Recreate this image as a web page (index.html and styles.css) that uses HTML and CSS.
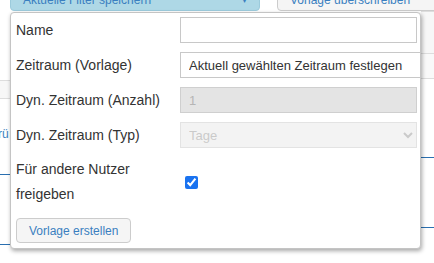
FILE: index.html
```html
<!DOCTYPE html>
<html lang="de">
<head>
<meta charset="utf-8">
<title>Filter speichern</title>
<link rel="stylesheet" href="styles.css">
</head>
<body>
<div class="page">
  <div class="toolbar">
    <button class="btn-save" type="button"><span>Aktuelle Filter speichern</span><span class="caret">▾</span></button>
    <button class="btn-overwrite" type="button">Vorlage überschreiben</button>
  </div>
  <div class="backdrop">
    <div class="side side-left">
      <div class="band band-left"></div>
      <div class="link-stub">rü</div>
      <div class="blue-line first"></div>
      <div class="blue-line second"></div>
    </div>
    <div class="middle"></div>
    <div class="side side-right">
      <div class="band band-right-a"></div>
      <div class="band band-right-b"></div>
      <div class="blue-line first-r"></div>
      <div class="blue-line second"></div>
    </div>
  </div>

  <div class="popup">
    <form class="form-grid">
      <label class="lbl" for="name">Name</label>
      <input class="ctl text" id="name" type="text">

      <label class="lbl" for="zeitraum">Zeitraum (Vorlage)</label>
      <div class="select-wrap">
        <select class="ctl select wide" id="zeitraum">
          <option>Aktuell gewählten Zeitraum festlegen</option>
        </select>
      </div>

      <label class="lbl" for="anzahl">Dyn. Zeitraum (Anzahl)</label>
      <input class="ctl text disabled" id="anzahl" type="text" placeholder="1" disabled>

      <label class="lbl" for="typ">Dyn. Zeitraum (Typ)</label>
      <select class="ctl select disabled-select" id="typ" disabled>
        <option>Tage</option>
      </select>

      <label class="lbl lbl-multi" for="share">Für andere Nutzer freigeben</label>
      <div class="check-cell"><input class="check" id="share" type="checkbox" checked></div>

      <div class="actions">
        <button class="btn-create" type="button">Vorlage erstellen</button>
      </div>
    </form>
  </div>
</div>
</body>
</html>
```
FILE: styles.css
```css
html, body {
  margin: 0;
  padding: 0;
  background: #fff;
}
body {
  width: 434px;
  height: 263px;
  overflow: hidden;
  font-family: "Liberation Sans", Arial, sans-serif;
  color: #333;
}
.page {
  position: relative;
  width: 434px;
  height: 263px;
  overflow: hidden;
}
.toolbar {
  display: flex;
  align-items: flex-start;
  margin-top: -23px;
  height: 34px;
}
.btn-save {
  flex: 0 0 auto;
  margin-left: 10px;
  width: 250px;
  height: 34px;
  display: flex;
  align-items: flex-end;
  justify-content: space-between;
  padding: 0 10px 3px 12px;
  background: #aed8e6;
  border: 1px solid #9ccbdc;
  border-radius: 4px;
  color: #3a7fc0;
  font: 12px/14px "Liberation Sans", Arial, sans-serif;
}
.caret {
  font-size: 10px;
  margin-right: 2px;
}
.btn-overwrite {
  flex: 0 0 auto;
  margin-left: 17px;
  width: 175px;
  height: 34px;
  display: flex;
  align-items: flex-end;
  padding: 0 12px 3px 12px;
  background: #f5f5f5;
  border: 1px solid #ccc;
  border-radius: 4px;
  color: #3a7fc0;
  font: 12px/14px "Liberation Sans", Arial, sans-serif;
}
.backdrop {
  display: grid;
  grid-template-columns: 10px 1fr 13px;
  height: 229px;
}
.side {
  display: flex;
  flex-direction: column;
}
.band {
  background: #f7f7f7;
  border-bottom: 1px solid #ddd;
}
.band-left {
  margin-top: 69px;
  height: 17px;
  border-top: 1px solid #ddd;
}
.link-stub {
  margin-top: 28px;
  margin-left: -2px;
  font-size: 12px;
  color: #3a7fc0;
  line-height: 14px;
  white-space: nowrap;
}
.blue-line {
  height: 1px;
  background: #2a6fb0;
}
.blue-line.first {
  margin-top: 33px;
}
.blue-line.second {
  margin-top: 69px;
}
.band-right-a {
  height: 41px;
  border-top: 1px solid #ddd;
}
.band-right-b {
  height: 24px;
  background: #f9f9f9;
}
.blue-line.first-r {
  margin-top: 78px;
}

.popup {
  position: absolute;
  left: 10px;
  top: 12px;
  width: 411px;
  height: 237px;
  box-sizing: border-box;
  background: #fff;
  border: 1px solid #c4c4c4;
  border-radius: 4px;
  box-shadow: 1px 2px 4px rgba(0, 0, 0, 0.35);
  padding: 4px 3px 4px 5px;
  overflow: hidden;
}
.form-grid {
  display: grid;
  grid-template-columns: 164px 237px;
  row-gap: 9px;
  align-items: center;
  margin: 0;
}
.lbl {
  font-size: 14px;
  line-height: 20px;
  color: #333;
}
.lbl-multi {
  line-height: 25px;
  width: 130px;
}
.ctl {
  box-sizing: border-box;
  height: 26px;
  margin: 0;
  font: 13px "Liberation Sans", Arial, sans-serif;
  color: #333;
  border: 1px solid #c8c8c8;
  border-radius: 0;
  background: #fff;
}
.text {
  width: 237px;
  padding: 0 8px;
}
.select-wrap {
  width: 240px;
}
.select {
  width: 237px;
  padding: 0 4px;
}
.select.wide {
  width: 262px;
  border-right-color: #fff;
}
.disabled {
  background: #e4e4e4;
  border-color: #cfcfcf;
}
.disabled::placeholder {
  color: #b5b5b5;
}
.disabled-select {
  background: #efefef;
  color: #b5b5b5;
  border-color: #d8d8d8;
}
.check-cell {
  display: flex;
  align-items: center;
}
.check {
  width: 13px;
  height: 13px;
  margin: 0 0 0 5px;
  accent-color: #1a73f0;
}
.actions {
  grid-column: 1 / 3;
  margin-top: 2px;
}
.btn-create {
  height: 25px;
  padding: 0 12px;
  background: #f5f5f5;
  border: 1px solid #ccc;
  border-radius: 4px;
  color: #3a7fc0;
  font: 12px "Liberation Sans", Arial, sans-serif;
}
```
